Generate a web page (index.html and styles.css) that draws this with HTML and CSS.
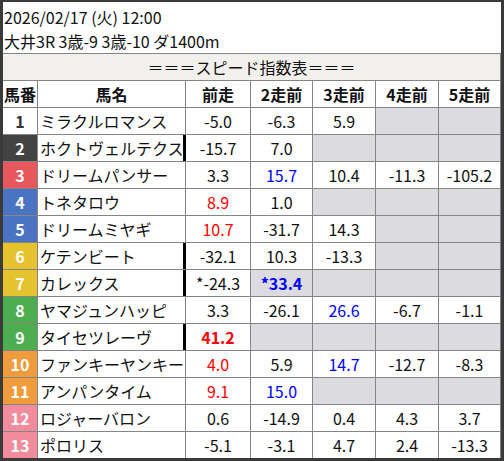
FILE: index.html
```html
<!DOCTYPE html>
<html lang="ja">
<head>
<meta charset="utf-8">
<link rel="stylesheet" href="styles.css">
</head>
<body>
<div class="sheet">
  <div class="info">
    <div>2026/02/17 (火) 12:00</div>
    <div>大井3R 3歳-9 3歳-10 ダ1400m</div>
  </div>
  <div class="grid">
    <div class="title">＝＝＝スピード指数表＝＝＝</div>
    <div class="th">馬番</div><div class="th">馬名</div><div class="th">前走</div><div class="th">2走前</div><div class="th">3走前</div><div class="th">4走前</div><div class="th">5走前</div>

    <div class="no w1">1</div><div class="name">ミラクルロマンス</div><div class="v">-5.0</div><div class="v">-6.3</div><div class="v">5.9</div><div class="v e"></div><div class="v e"></div>

    <div class="no w2">2</div><div class="name mark">ホクトヴェルテクス</div><div class="v">-15.7</div><div class="v">7.0</div><div class="v e"></div><div class="v e"></div><div class="v e"></div>

    <div class="no w3">3</div><div class="name">ドリームパンサー</div><div class="v">3.3</div><div class="v blue">15.7</div><div class="v">10.4</div><div class="v">-11.3</div><div class="v">-105.2</div>

    <div class="no w4">4</div><div class="name">トネタロウ</div><div class="v red">8.9</div><div class="v">1.0</div><div class="v e"></div><div class="v e"></div><div class="v e"></div>

    <div class="no w4">5</div><div class="name">ドリームミヤギ</div><div class="v red">10.7</div><div class="v">-31.7</div><div class="v">14.3</div><div class="v e"></div><div class="v e"></div>

    <div class="no w5">6</div><div class="name mark">ケテンビート</div><div class="v">-32.1</div><div class="v">10.3</div><div class="v">-13.3</div><div class="v e"></div><div class="v e"></div>

    <div class="no w5">7</div><div class="name mark">カレックス</div><div class="v">*-24.3</div><div class="v e blue bold">*33.4</div><div class="v e"></div><div class="v e"></div><div class="v e"></div>

    <div class="no w6">8</div><div class="name">ヤマジュンハッピ</div><div class="v">3.3</div><div class="v">-26.1</div><div class="v blue">26.6</div><div class="v">-6.7</div><div class="v">-1.1</div>

    <div class="no w6">9</div><div class="name mark">タイセツレーヴ</div><div class="v red bold">41.2</div><div class="v e"></div><div class="v e"></div><div class="v e"></div><div class="v e"></div>

    <div class="no w7">10</div><div class="name">ファンキーヤンキー</div><div class="v red">4.0</div><div class="v">5.9</div><div class="v blue">14.7</div><div class="v">-12.7</div><div class="v">-8.3</div>

    <div class="no w7">11</div><div class="name">アンパンタイム</div><div class="v red">9.1</div><div class="v blue">15.0</div><div class="v e"></div><div class="v e"></div><div class="v e"></div>

    <div class="no w8">12</div><div class="name">ロジャーバロン</div><div class="v">0.6</div><div class="v">-14.9</div><div class="v">0.4</div><div class="v">4.3</div><div class="v">3.7</div>

    <div class="no w8">13</div><div class="name">ポロリス</div><div class="v">-5.1</div><div class="v">-3.1</div><div class="v">4.7</div><div class="v">2.4</div><div class="v">-13.3</div>
  </div>
</div>
</body>
</html>
```

FILE: styles.css
```css
html, body {
  margin: 0;
  padding: 0;
  background: #ffffff;
}

body {
  font-family: "Noto Sans CJK JP", "Noto Sans", sans-serif;
  font-size: 16px;
  color: #111;
}

.sheet {
  box-sizing: border-box;
  width: 504px;
  height: 461px;
  border-style: solid;
  border-color: #3a3a3a;
  border-width: 2px 3px 3px 3px;
  background: #fff;
  display: flex;
  flex-direction: column;
}

.info {
  height: 51px;
  padding: 3px 0 0 1px;
  box-sizing: border-box;
  line-height: 24px;
}

.grid {
  display: grid;
  grid-template-columns: 34px 147px 64px 61px 62px 62px 61px;
  grid-auto-rows: 26px;
  gap: 1px;
  background: #858585;
  border-top: 1px solid #858585;
  border-right: 1px solid #858585;
}

.grid > div {
  background: #fff;
  line-height: 26px;
  white-space: nowrap;
  overflow: visible;
}

.grid > .title {
  grid-column: 1 / -1;
  background: #f2f0ec;
  text-align: center;
}

.th {
  font-weight: bold;
  text-align: center;
}

.no {
  font-weight: bold;
  text-align: center;
  color: #fff;
}

.grid > .w1 { background: #fff; color: #333; }
.grid > .w2 { background: #434343; }
.grid > .w3 { background: #e8575b; }
.grid > .w4 { background: #4a73c2; }
.grid > .w5 { background: #e6c22f; }
.grid > .w6 { background: #4cae4f; }
.grid > .w7 { background: #f09b3c; }
.grid > .w8 { background: #f28c9d; }

.name {
  padding-left: 2px;
  box-sizing: border-box;
}

.mark {
  border-right: 2px solid #000;
  box-shadow: 1px 0 0 #000;
}

.v {
  text-align: center;
}

.grid > .e {
  background: #dcdce0;
}

.red { color: #ff0000; }
.blue { color: #0000ff; }
.bold { font-weight: bold; }
```
